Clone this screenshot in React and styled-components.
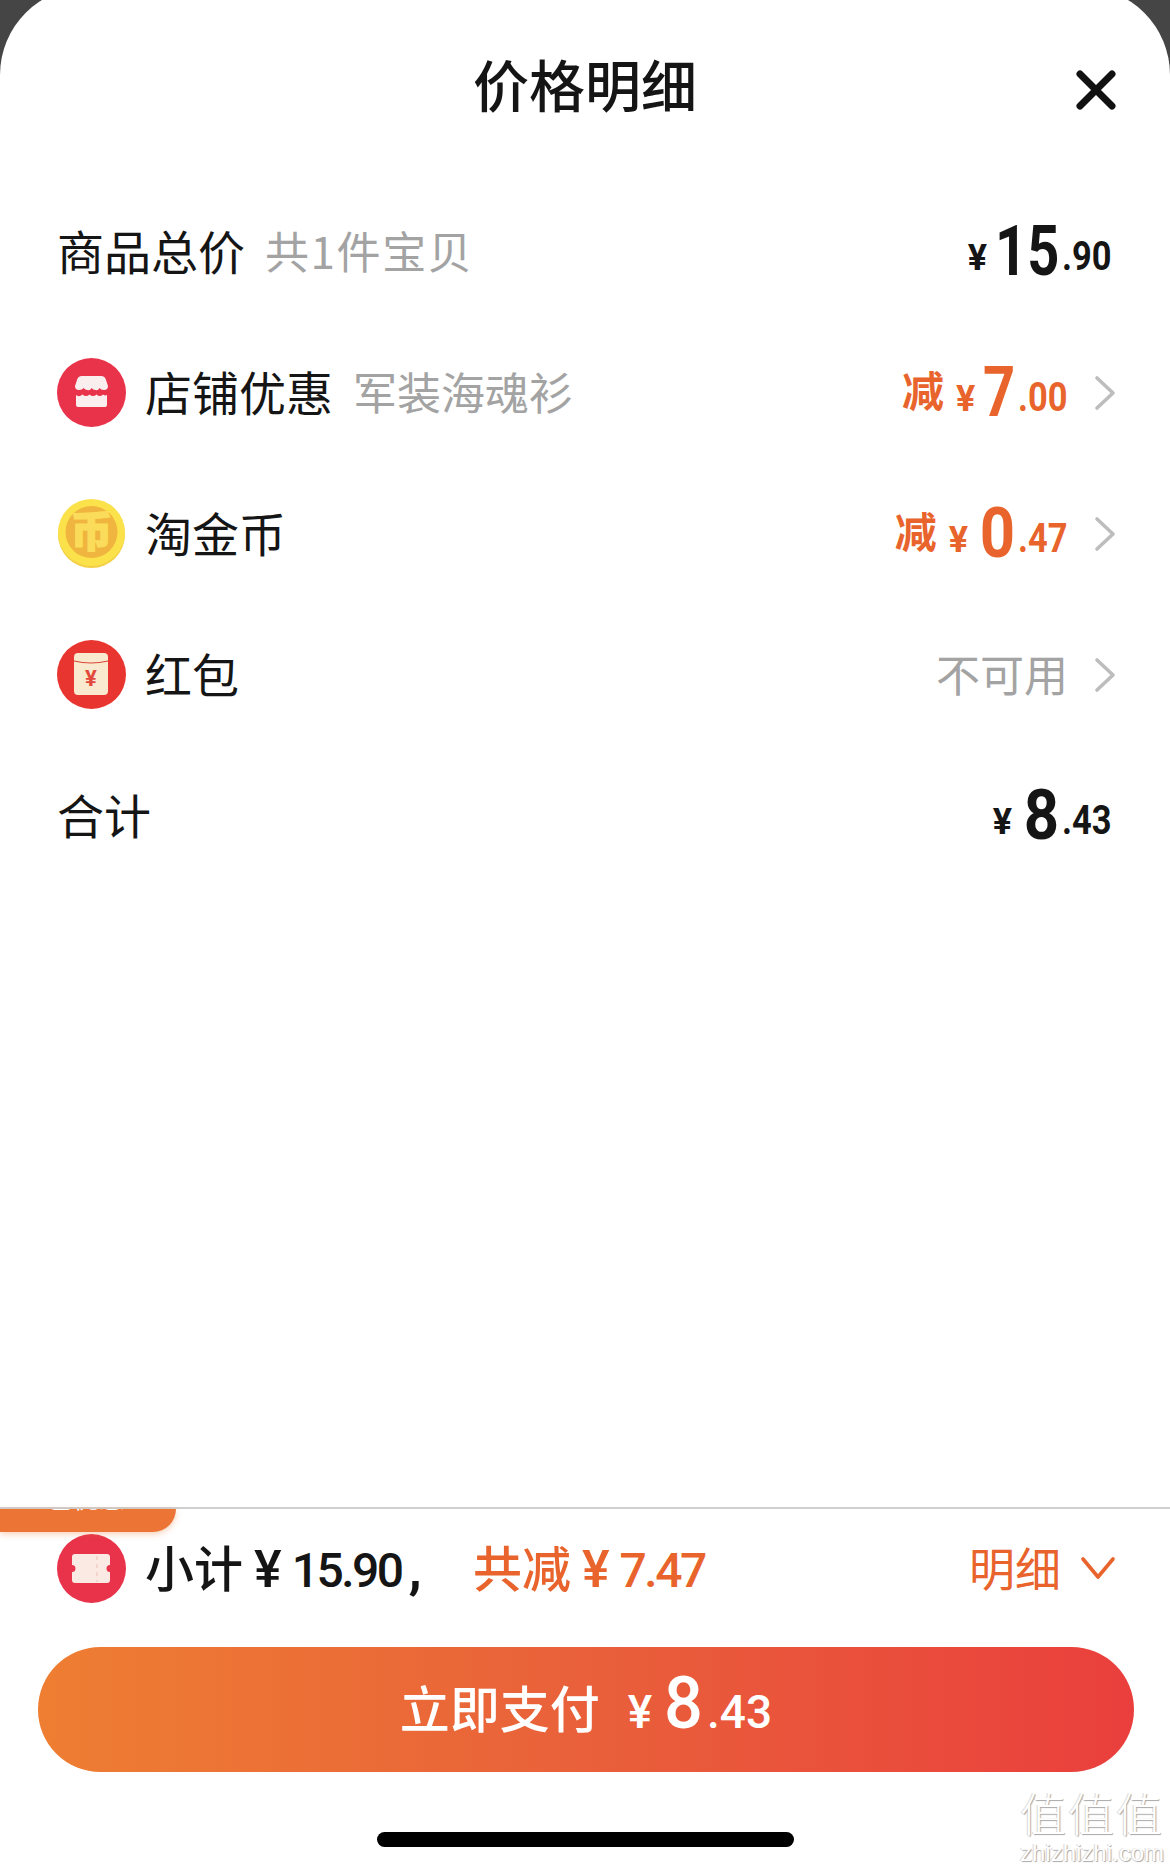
import React from 'react';
import styled, { createGlobalStyle } from 'styled-components';

const CJK = '"Noto Sans CJK SC", "Noto Sans", sans-serif';
const NUM = 'Roboto, "Liberation Sans", sans-serif';

const GlobalStyle = createGlobalStyle`
  html, body { margin: 0; padding: 0; background: #454545; }
  body { font-family: ${CJK}; }
`;

const Page = styled.div`
  width: 1170px;
  height: 1872px;
  overflow: hidden;
  position: relative;
  background: #454545;
`;

const Sheet = styled.div`
  margin-top: -13px;
  height: 1885px;
  background: #fff;
  border-radius: 88px 88px 0 0;
  display: flex;
  flex-direction: column;
`;

const Header = styled.div`
  height: 194px;
  flex: none;
  display: grid;
  grid-template-columns: 1fr auto 1fr;
  align-items: start;
  padding-top: 56px;
  box-sizing: border-box;
`;

const Title = styled.h1`
  grid-column: 2;
  margin: 0;
  font-size: 56px;
  line-height: 80px;
  font-weight: 500;
  color: #151515;
`;

const Close = styled.button`
  justify-self: end;
  margin: 25px 54px 0 0;
  padding: 0;
  border: 0;
  background: none;
  display: block;
  width: 40px;
  height: 44px;
`;

const Row = styled.div`
  height: 141px;
  flex: none;
  display: flex;
  align-items: center;
  padding: 0 58px 0 57px;
  box-sizing: border-box;
`;

const RowIcon = styled.svg`
  width: 69px;
  height: 69px;
  flex: none;
  margin-right: 19px;
  display: block;
`;

const Label = styled.span`
  font-size: 47px;
  line-height: 60px;
  color: #151515;
  margin-bottom: 4px;
`;

const Sub = styled.span`
  font-size: 44px;
  line-height: 60px;
  color: #a3a3a3;
  margin: 0 0 4px 20px;
  letter-spacing: ${p => p.$spacing || 0}px;
`;

const Right = styled.div`
  margin-left: auto;
  display: flex;
  align-items: center;
`;

const Chevron = styled.svg`
  width: 22px;
  height: 36px;
  margin-left: 26px;
  margin-right: -4px;
  display: block;
`;

const Unavailable = styled.span`
  font-size: 44px;
  line-height: 60px;
  color: #a3a3a3;
  margin-bottom: 4px;
`;

const PriceWrap = styled.span`
  display: inline-flex;
  align-items: baseline;
  font-family: ${NUM};
  font-weight: 700;
  color: ${p => p.$color || '#151515'};
  line-height: 70px;
`;

const Cut = styled.span`
  font-family: ${CJK};
  font-size: 42px;
  font-weight: 700;
  margin-right: 12px;
  transform: translateY(-4px);
`;

const Yen = styled.span`
  font-size: 36px;
  margin-right: ${p => (p.$wide ? 12 : 8)}px;
`;

const Int = styled.span`
  display: inline-block;
  font-size: 70px;
  margin-left: ${p => -0.57 * (1 - p.$scale) * p.$n}em;
  margin-right: 3px;
  transform: translateY(5px) scaleX(${p => p.$scale});
  transform-origin: right;
`;

const Dec = styled.span`
  display: inline-block;
  font-size: 40px;
  margin-left: -0.2em;
  transform: scaleX(0.86);
  transform-origin: right;
`;

const Spacer = styled.div`
  flex: 1;
`;

const Footer = styled.div`
  flex: none;
  position: relative;
  border-top: 2px solid #cfcfcf;
  padding-bottom: 25px;
`;

const Tab = styled.div`
  position: absolute;
  left: 0;
  top: 0;
  width: 176px;
  height: 23px;
  overflow: hidden;
  background: #ec7535;
  border-radius: 0 0 30px 0;
  box-shadow: 0 2px 6px rgba(236, 117, 53, 0.35);
  color: #fff;
  font-size: 26px;
  line-height: 30px;
  text-align: center;
`;

const TabText = styled.span`
  display: block;
  margin-top: -27px;
  padding-right: 4px;
`;

const Summary = styled.div`
  height: 118px;
  display: flex;
  align-items: center;
  padding: 0 55px 0 57px;
  box-sizing: border-box;
`;

const SumText = styled.span`
  font-size: 49px;
  line-height: 60px;
  font-weight: 500;
  color: ${p => p.$color || '#151515'};
  margin-right: ${p => p.$gap || 0}px;
  display: inline-flex;
  align-items: baseline;
`;

const SumYen = styled.span`
  font-family: ${NUM};
  font-size: 52px;
  font-weight: 500;
  margin: 0 10px 0 11px;
`;

const SumNum = styled.span`
  font-family: ${NUM};
  font-weight: 500;
  font-size: 48px;
  letter-spacing: -2.5px;
`;

const SumComma = styled.span`
  font-family: ${NUM};
  font-weight: 700;
  font-size: 54px;
  margin-left: 7px;
`;

const Detail = styled.span`
  margin-left: auto;
  font-size: 46px;
  line-height: 60px;
  color: #e8642c;
  margin-bottom: 4px;
`;

const DetailArrow = styled.svg`
  width: 36px;
  height: 24px;
  margin-left: 19px;
  margin-right: -1px;
  display: block;
`;

const PayButton = styled.button`
  display: flex;
  align-items: baseline;
  justify-content: center;
  margin: 20px 36px 0 38px;
  width: 1096px;
  height: 125px;
  padding: 22px 0 0;
  box-sizing: border-box;
  border: 0;
  border-radius: 63px;
  background: linear-gradient(90deg, #ee7e32 0%, #e9603a 50%, #ea3f3d 100%);
  color: #fff;
`;

const PayLabel = styled.span`
  font-family: ${CJK};
  font-size: 50px;
  font-weight: 500;
  line-height: 70px;
  margin-right: 28px;
`;

const PayPrice = styled.span`
  font-family: ${NUM};
  display: inline-flex;
  align-items: baseline;
  line-height: 70px;
  font-weight: 500;
`;

const PayYen = styled.span`
  font-size: 46px;
  margin-right: 12px;
`;

const PayInt = styled.span`
  display: inline-block;
  font-size: 72px;
  margin-left: -0.03em;
  margin-right: 4px;
  transform: scaleX(0.95);
  transform-origin: right;
`;

const PayDec = styled.span`
  font-size: 46px;
`;

const HomeBar = styled.div`
  width: 417px;
  height: 15px;
  margin: 60px auto 0;
  background: #000;
  border-radius: 8px;
`;

const Watermark = styled.div`
  position: absolute;
  right: 6px;
  bottom: 6px;
  text-align: center;
  color: #fff;
  text-shadow: 1px 1px 1px #a8a8a8, -1px 0 0 #d8d8d8;
`;

const MarkTitle = styled.div`
  font-size: 46px;
  line-height: 58px;
  font-weight: 300;
  letter-spacing: 2px;
`;

const MarkUrl = styled.div`
  font-family: "Liberation Sans", sans-serif;
  font-size: 24px;
  line-height: 26px;
`;

const Price = ({ cut, int, dec, color, wide }) => (
  <PriceWrap $color={color}>
    {cut && <Cut>减</Cut>}
    <Yen $wide={wide}>¥</Yen>
    <Int $n={int.length} $scale={wide ? 0.88 : 0.8}>{int}</Int>
    <Dec>.{dec}</Dec>
  </PriceWrap>
);

const RightChevron = () => (
  <Chevron viewBox="0 0 22 36" fill="none" stroke="#bdbdbd" strokeWidth="3.6" strokeLinecap="round" strokeLinejoin="round">
    <path d="M3 3 L19 18 L3 33" />
  </Chevron>
);

const StoreIcon = () => (
  <RowIcon viewBox="0 0 69 69">
    <circle cx="34.5" cy="34.5" r="34.5" fill="#e8334a" />
    <path d="M25 18 H44 Q48 18 49 22 L51 28 Q51 32 47 32 Q43.500 32 42.500 30 Q41 33 38.500 32 Q36 32 34.500 30 Q33 33 30.500 32 Q28 32 26.500 30 Q25.500 32 22 32 Q18 32 18 28 L20 22 Q21 18 25 18 Z" fill="#fbeeee" />
    <path d="M19 37 Q22 39.500 25.500 36.500 Q29 39.500 32.500 36.500 Q36 39.500 39.500 36.500 Q43 39.500 46 36.500 Q48 38 50 37 V47 A2 2 0 0 1 48 49 H21 A2 2 0 0 1 19 47 Z" fill="#fbeeee" />
  </RowIcon>
);

const CoinIcon = () => (
  <RowIcon viewBox="0 0 69 69">
    <circle cx="34.5" cy="35.5" r="33.5" fill="#f3cf45" />
    <circle cx="34.5" cy="33.5" r="33.500" fill="#fbe24b" />
    <circle cx="34.5" cy="33" r="26" fill="#f0b53e" />
    <text x="34.5" y="48" textAnchor="middle" fontSize="42" fontWeight="900" fill="#fbdc5a" stroke="#fbdc5a" strokeWidth="1.200" fontFamily={CJK}>币</text>
  </RowIcon>
);

const EnvelopeIcon = () => (
  <RowIcon viewBox="0 0 69 69">
    <circle cx="34.5" cy="34.5" r="34.5" fill="#e9352f" />
    <rect x="17" y="13" width="34" height="42" rx="4" fill="#f9e9cf" />
    <path d="M17 21 Q34 25 51 21" fill="none" stroke="#d9473a" strokeWidth="1.200" />
    <text x="34" y="46" textAnchor="middle" fontSize="22" fontWeight="700" fill="#e2483c" fontFamily={NUM}>¥</text>
  </RowIcon>
);

const TicketIcon = () => (
  <RowIcon viewBox="0 0 69 69">
    <circle cx="34.5" cy="34.5" r="34.5" fill="#e8334a" />
    <path d="M18 20 H50 A3 3 0 0 1 53 23 V31 A3.500 3.500 0 0 0 53 38 V46 A3 3 0 0 1 50 49 H18 A3 3 0 0 1 15 46 V38 A3.500 3.500 0 0 0 15 31 V23 A3 3 0 0 1 18 20 Z" fill="#fbeae4" />
    <path d="M40 22 V48" stroke="#f0cfc6" strokeWidth="1.500" strokeDasharray="4 4" />
  </RowIcon>
);

export default function App() {
  return (
    <Page>
      <GlobalStyle />
      <Sheet>
        <Header>
          <Title>价格明细</Title>
          <Close aria-label="关闭">
            <svg width="40" height="44" viewBox="0 0 40 44" fill="none" stroke="#111" strokeWidth="7" strokeLinecap="round">
              <path d="M4 6 L36 38 M36 6 L4 38" />
            </svg>
          </Close>
        </Header>

        <Row>
          <Label>商品总价</Label>
          <Sub $spacing={1.6}>共1件宝贝</Sub>
          <Right>
            <Price int="15" dec="90" />
          </Right>
        </Row>
        <Row>
          <StoreIcon />
          <Label>店铺优惠</Label>
          <Sub>军装海魂衫</Sub>
          <Right>
            <Price cut int="7" dec="00" color="#e8642c" />
            <RightChevron />
          </Right>
        </Row>
        <Row>
          <CoinIcon />
          <Label>淘金币</Label>
          <Right>
            <Price cut wide int="0" dec="47" color="#e8642c" />
            <RightChevron />
          </Right>
        </Row>
        <Row>
          <EnvelopeIcon />
          <Label>红包</Label>
          <Right>
            <Unavailable>不可用</Unavailable>
            <RightChevron />
          </Right>
        </Row>
        <Row>
          <Label>合计</Label>
          <Right>
            <Price wide int="8" dec="43" />
          </Right>
        </Row>

        <Spacer />

        <Footer>
          <Tab><TabText>已优惠</TabText></Tab>
          <Summary>
            <TicketIcon />
            <SumText $gap={51}>小计<SumYen>¥</SumYen><SumNum>15.90</SumNum><SumComma>,</SumComma></SumText>
            <SumText $color="#e8642c">共减<SumYen>¥</SumYen><SumNum>7.47</SumNum></SumText>
            <Detail>明细</Detail>
            <DetailArrow viewBox="0 0 36 24" fill="none" stroke="#e8642c" strokeWidth="3.600" strokeLinecap="round" strokeLinejoin="round">
              <path d="M3 3 L18 21 L33 3" />
            </DetailArrow>
          </Summary>
          <PayButton>
            <PayLabel>立即支付</PayLabel>
            <PayPrice>
              <PayYen>¥</PayYen>
              <PayInt>8</PayInt>
              <PayDec>.43</PayDec>
            </PayPrice>
          </PayButton>
          <HomeBar />
        </Footer>
      </Sheet>
      <Watermark>
        <MarkTitle>值值值</MarkTitle>
        <MarkUrl>zhizhizhi.com</MarkUrl>
      </Watermark>
    </Page>
  );
}
